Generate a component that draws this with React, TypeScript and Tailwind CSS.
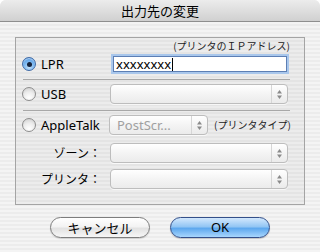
import React from 'react';

const FONT = "font-['Noto_Sans','Noto_Sans_CJK_JP',sans-serif]";
const JP = "font-['Noto_Sans_CJK_JP',sans-serif]";

const Radio: React.FC<{ checked?: boolean }> = ({ checked }) =>
  checked ? (
    <span className="relative flex h-[14px] w-[14px] shrink-0 items-center justify-center rounded-full border border-[#3f6aa6] bg-[radial-gradient(circle_at_50%_75%,#c4e2fc_0%,#6fb0ee_55%,#3f86d6_100%)] shadow-[inset_0_1px_1px_rgba(255,255,255,0.6)]">
      <span className="h-[5px] w-[5px] rounded-full bg-[#15233d]" />
    </span>
  ) : (
    <span className="h-[14px] w-[14px] shrink-0 rounded-full border border-[#8c8c8c] bg-[radial-gradient(circle_at_50%_80%,#ffffff_0%,#ececec_50%,#c9c9c9_100%)]" />
  );

const Arrows: React.FC = () => (
  <svg width="7" height="11" viewBox="0 0 7 11">
    <path d="M3.5 1 L6 4.5 L1 4.5 Z" fill="#8a8a8a" />
    <path d="M3.5 10 L6 6.5 L1 6.5 Z" fill="#8a8a8a" />
  </svg>
);

const Popup: React.FC<{ width: string; text?: string }> = ({ width, text }) => (
  <div
    className={`flex h-[20px] ${width} items-stretch rounded-[4px] border border-[#bdbdbd] bg-[linear-gradient(to_bottom,#ffffff_0%,#f4f4f4_50%,#ebebeb_100%)] shadow-[0_1px_0_rgba(255,255,255,0.7)]`}
  >
    <div className="flex flex-1 items-center pl-[7px] text-[13px] leading-none text-[#a0a0a0]">{text}</div>
    <div className="flex w-[16px] items-center justify-center border-l border-[#d6d6d6]">
      <Arrows />
    </div>
  </div>
);

export default function App() {
  return (
    <div className={`h-[252px] w-[320px] overflow-hidden bg-white ${FONT} text-black`}>
      <div className="h-[252px] w-[320px] overflow-hidden rounded-t-[6px] bg-[repeating-linear-gradient(to_bottom,#ececec_0px,#ececec_2px,#f4f4f4_2px,#f4f4f4_4px)]">
        {/* title bar */}
        <div className="flex h-[22px] items-center justify-center border-b border-[#8f8f8f] bg-[linear-gradient(to_bottom,#ececec,#d0d0d0)]">
          <span className={`${JP} text-[13px] leading-none`}>出力先の変更</span>
        </div>

        <div className="flex flex-col items-center pt-[15px]">
          {/* group box */}
          <div className="h-[168px] w-[290px] border border-[#a4a4a4] bg-black/[0.03]">
            <div className={`${JP} flex h-[16px] items-center justify-end pr-[14px] text-[10px] leading-none text-[#222]`}>
              (プリンタのＩＰアドレス)
            </div>

            <div className="flex h-[20px] items-center pl-[6px]">
              <div className="flex w-[89px] items-center gap-[5px]">
                <Radio checked />
                <span className="text-[13px] leading-none">LPR</span>
              </div>
              <div className="flex h-[16px] w-[174px] ml-[2px] items-center bg-white pl-[2px] border border-[#5d7fb4] shadow-[0_0_0_2px_#a9c7ec]">
                <span className="text-[13px] leading-none">xxxxxxxx</span>
                <span className="ml-[1px] h-[13px] w-px bg-black" />
              </div>
            </div>

            <div className="ml-[7px] mt-[5px] h-px w-[267px] bg-[#a8a8a8]" />

            <div className="mt-[4px] flex h-[20px] items-center pl-[6px]">
              <div className="flex w-[88px] items-center gap-[5px]">
                <Radio />
                <span className="text-[13px] leading-none">USB</span>
              </div>
              <Popup width="w-[178px]" />
            </div>

            <div className="ml-[7px] mt-[6px] h-px w-[267px] bg-[#a8a8a8]" />

            <div className="mt-[4px] flex h-[20px] items-center pl-[6px]">
              <div className="flex w-[87px] items-center gap-[5px]">
                <Radio />
                <span className="text-[13px] leading-none">AppleTalk</span>
              </div>
              <Popup width="w-[99px]" text="PostScr..." />
              <span className={`${JP} ml-[6px] text-[10px] leading-none text-[#222]`}>(プリンタタイプ)</span>
            </div>

            <div className="mt-[8px] flex h-[20px] items-center pl-[6px]">
              <div className={`${JP} w-[88px] pr-[9px] text-right text-[12px] leading-none`}>ゾーン：</div>
              <Popup width="w-[178px]" />
            </div>

            <div className="mt-[6px] flex h-[20px] items-center pl-[6px]">
              <div className={`${JP} w-[88px] pr-[9px] text-right text-[12px] leading-none`}>プリンタ：</div>
              <Popup width="w-[178px]" />
            </div>
          </div>

          {/* buttons */}
          <div className="mt-[12px] flex gap-[20px]">
            <button className={`${JP} flex h-[21px] w-[100px] items-center justify-center rounded-full border border-[#7d7d7d] bg-[linear-gradient(to_bottom,#ffffff_0%,#f3f3f3_45%,#e2e2e2_55%,#f6f6f6_100%)] text-[13px] leading-none shadow-[0_1px_1px_rgba(0,0,0,0.15)]`}>
              キャンセル
            </button>
            <button className="flex h-[21px] w-[100px] items-center justify-center rounded-full border border-[#34508a] bg-[linear-gradient(to_bottom,#d3e8fd_0%,#93c6f4_45%,#5ea8ee_55%,#a8d6fd_100%)] text-[13px] leading-none shadow-[0_1px_1px_rgba(0,0,0,0.2)]">
              OK
            </button>
          </div>
        </div>
      </div>
    </div>
  );
}
